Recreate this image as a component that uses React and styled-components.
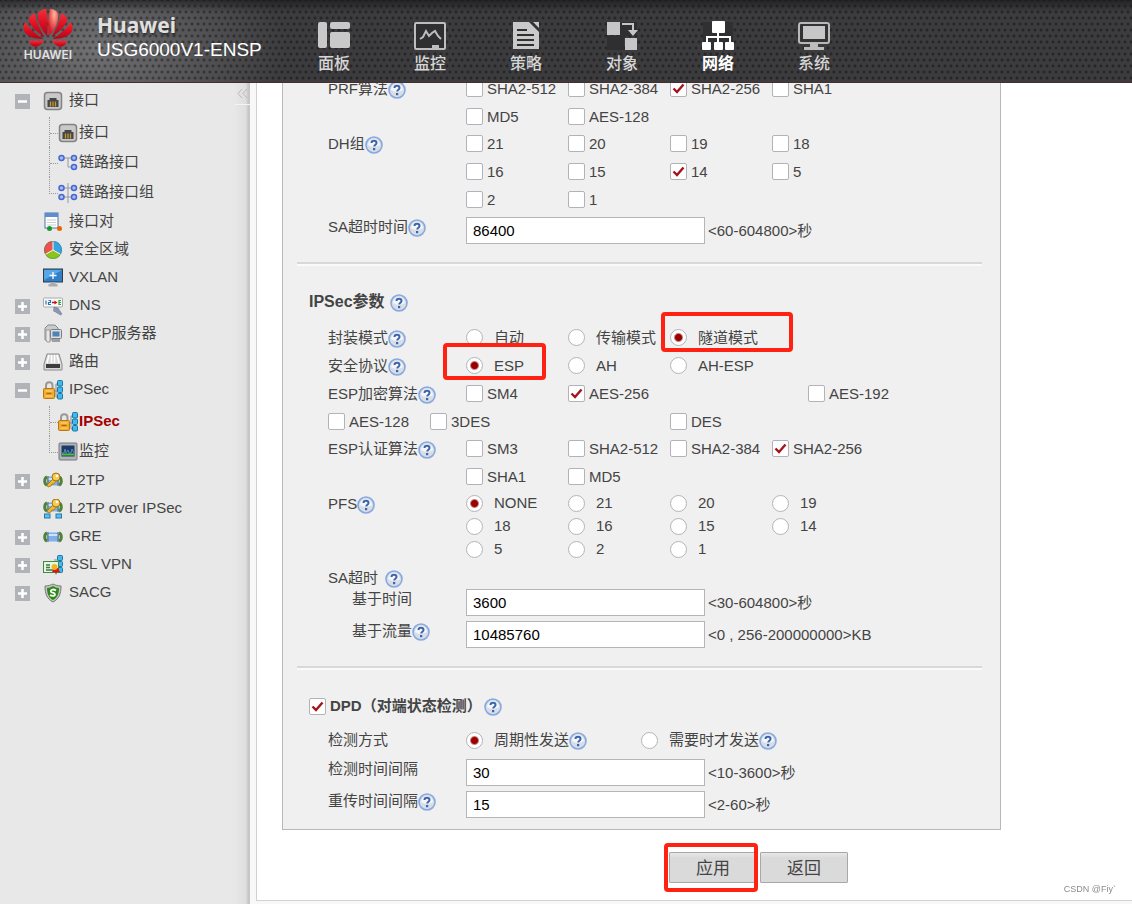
import { useState } from "react";
import styled, { createGlobalStyle } from "styled-components";

const GlobalStyle = createGlobalStyle`
  * {
    box-sizing: border-box;
  }
  body {
    margin: 0;
    background: #f8f8f8;
    color: #444;
    font-family: "Liberation Sans", "Noto Sans CJK SC", sans-serif;
    font-size: 15px;
    line-height: 20px;
  }
`;

const Page = styled.div`
  display: flex;
  flex-direction: column;
  height: 100vh;
`;

/* ---------- header ---------- */

const Header = styled.header`
  display: flex;
  align-items: flex-start;
  flex: none;
  height: 83px;
  color: #fff;
  border-bottom: 1px solid #4a2c2c;
  background:
    linear-gradient(rgba(20, 20, 22, 0.6), transparent 12px),
    radial-gradient(circle, rgba(0, 0, 0, 0.35) 1px, transparent 2px) 0 0 / 6px 12px,
    radial-gradient(circle, rgba(0, 0, 0, 0.35) 1px, transparent 2px) 3px 6px / 6px 12px,
    radial-gradient(ellipse 190px 120px at 95px 50px, #717173, #3c3c3e);
`;

const Brand = styled.div`
  display: flex;
  flex: none;
  width: 286px;
  padding: 8px 0 0 22px;
`;

const LogoBox = styled.div`
  display: flex;
  flex-direction: column;
  align-items: center;
  width: 52px;
  margin-right: 23px;
  font: 600 12px/14px Inter, sans-serif;
  color: #e2e2e2;
`;

const BrandName = styled.div`
  margin-top: 6px;
  font: bold 21px/22px "Noto Sans", sans-serif;
  color: #e0e0e0;
  text-shadow: 1px 2px 2px rgba(0, 0, 0, 0.5);
`;

const Model = styled.div`
  font-size: 19px;
  line-height: 28px;
  white-space: nowrap;
`;

const TopNav = styled.nav`
  display: flex;
`;

const TopLink = styled.a`
  display: flex;
  flex-direction: column;
  align-items: center;
  width: 96px;
  padding-top: 21px;
  color: ${(p) => (p.$active ? "#fff" : "#d6d6d6")};
  font-size: 16px;
  font-weight: ${(p) => (p.$active ? 700 : 500)};
  line-height: 28px;
  text-decoration: none;
  svg {
    width: 32px;
    height: 29px;
  }
`;

/* ---------- sidebar ---------- */

const Body = styled.div`
  display: flex;
  flex: 1;
  min-height: 0;
`;

const Sidebar = styled.aside`
  position: relative;
  flex: none;
  width: 250px;
  padding: 3px 0 0 15px;
  background: linear-gradient(90deg, #e8e8e8 234px, #dedede 246px, #c8c8c8 248px, #c4c4c4);
`;

const Collapse = styled.button`
  position: absolute;
  top: 0;
  right: 0;
  width: 15px;
  height: 22px;
  padding: 0;
  border: none;
  border-bottom: 1px solid #f4f4f4;
  background: none;
  color: #b9b9b9;
  line-height: 0;
`;

const Tree = styled.ul`
  margin: 0;
  padding: 0;
  list-style: none;
`;

const TreeRow = styled.div`
  display: flex;
  align-items: center;
  height: 28px;
`;

const Toggle = styled.button`
  width: 15px;
  height: 15px;
  margin: 3px 13px 0 0;
  padding: 0;
  border: none;
  background: #b0b4b8;
  line-height: 0;
  visibility: ${(p) => (p.$hidden ? "hidden" : "visible")};
`;

const TreeLink = styled.a`
  display: flex;
  align-items: center;
  color: ${(p) => (p.$active ? "#a50000" : "#444")};
  font-weight: ${(p) => (p.$active ? 700 : 400)};
  text-decoration: none;
  white-space: nowrap;
  svg {
    width: 20px;
    height: 20px;
    margin: 2px ${(p) => (p.$sub ? 1 : 6)}px 0 0;
  }
`;

const SubTree = styled.ul`
  margin: 3px 0 0 34px;
  padding: 0;
  list-style: none;
  li {
    display: flex;
    height: 30px;
    border-left: 1px dotted #999;
  }
  li::before {
    content: "";
    flex: none;
    width: 8px;
    height: 16px;
    border-bottom: 1px dotted #999;
  }
  li:last-child {
    border-left: none;
  }
  li:last-child::before {
    border-left: 1px dotted #999;
  }
`;

/* ---------- content ---------- */

const Main = styled.main`
  display: flex;
  flex-direction: column;
  flex: 1;
  min-width: 0;
  margin: 0 0 3px 6px;
  border: solid #d2d2d2;
  border-width: 0 0 1px 1px;
  background: #fff;
`;

/* column-reverse keeps the form scrolled to its end */
const Scroller = styled.div`
  display: flex;
  flex-direction: column-reverse;
  flex: 1;
  min-height: 0;
  overflow-y: auto;
  scrollbar-width: none;
`;

const Form = styled.form`
  flex: none;
  padding: 0 131px 17px 25px;
`;

const Panel = styled.div`
  padding: 20px 18px 6px 14px;
  border: 1px solid #b8b8bc;
  background: #f0f0f0;
`;

const Section = styled.section`
  padding: 0 0 13px 31px;
  &:last-child {
    padding-bottom: 0;
  }
`;

const Divider = styled.hr`
  height: 4px;
  margin: 0;
  border: none;
  border-top: 2px solid #d8d8d8;
  border-bottom: 2px solid #fafafa;
`;

const Heading = styled.h2`
  display: flex;
  align-items: center;
  gap: ${(p) => p.$gap}px;
  height: 24px;
  margin: 24px 0 10px -19px;
  font-size: ${(p) => p.$size}px;
  font-weight: 700;
`;

const Row = styled.div`
  display: flex;
  min-height: ${(p) => p.$height}px;
  padding-top: ${(p) => p.$top || 0}px;
`;

const Label = styled.div`
  display: flex;
  align-items: center;
  flex: none;
  gap: ${(p) => p.$gap || 0}px;
  width: 138px;
  height: ${(p) => p.$height}px;
  padding-left: ${(p) => p.$indent || 0}px;
  white-space: nowrap;
`;

const Options = styled.div`
  display: grid;
  grid-template-columns: ${(p) => p.$columns || "repeat(4, 102px)"};
  grid-auto-rows: ${(p) => p.$height}px;
  row-gap: 1px;
`;

const Option = styled.label`
  position: relative;
  display: flex;
  align-items: center;
  gap: ${(p) => p.$gap}px;
  white-space: nowrap;
`;

const OptionText = styled.span`
  display: flex;
  align-items: center;
`;

const CheckBox = styled.span`
  position: relative;
  display: flex;
  svg {
    position: absolute;
    inset: 0;
    pointer-events: none;
  }
`;

const Check = styled.input`
  appearance: none;
  flex: none;
  width: 17px;
  height: 17px;
  margin: 0;
  border: 1px solid #b2b2b9;
  border-radius: 2px;
  background: #fff;
`;

const Radio = styled.input`
  appearance: none;
  flex: none;
  width: 17px;
  height: 17px;
  margin: 0;
  border: 1px solid #b4b4b8;
  border-radius: 50%;
  background: #fff;
  &:checked {
    background: radial-gradient(circle, #990000 3px, #fff 5px);
  }
`;

const TextBox = styled.input`
  width: 239px;
  height: 27px;
  padding: 0 6px;
  border: 1px solid #b5b5b9;
  background: #fff;
  color: #000;
  font: inherit;
`;

const Hint = styled.span`
  padding-left: 3px;
  line-height: 28px;
  white-space: nowrap;
`;

const HelpButton = styled.button`
  flex: none;
  width: 18px;
  height: 18px;
  margin: 2px 0 0;
  padding: 0;
  border: none;
  background: none;
  line-height: 0;
`;

const Buttons = styled.div`
  display: flex;
  gap: 3px;
  padding: 22px 0 0 387px;
`;

const Button = styled.button`
  position: relative;
  width: 88px;
  height: 31px;
  padding: 2px 0 0;
  border: 1px solid #a8a8ab;
  border-radius: 1px;
  background: linear-gradient(#e8e8e8, #dadada 5px);
  color: #444;
  font: 17px/20px "Liberation Sans", "Noto Sans CJK SC", sans-serif;
`;

const Mark = styled.span`
  position: absolute;
  left: ${(p) => p.$left}px;
  top: ${(p) => p.$top}px;
  z-index: 1;
  width: ${(p) => p.$width}px;
  height: ${(p) => p.$height}px;
  border: 4px solid #ff2213;
  border-radius: 4px;
  pointer-events: none;
`;

const Watermark = styled.div`
  position: fixed;
  right: 16px;
  bottom: 5px;
  color: #8c8c8c;
  font-size: 9px;
`;

/* ---------- drawings ---------- */

const HuaweiLogo = () => (
  <svg width="50" height="40" viewBox="0 0 50 40">
    <defs>
      <linearGradient id="petal" x1="0" y1="0" x2="0" y2="1">
        <stop offset="0" stopColor="#f2303a" />
        <stop offset="0.5" stopColor="#dc0f20" />
        <stop offset="1" stopColor="#b00518" />
      </linearGradient>
      <radialGradient id="shine" cx="0.6" cy="0.2" r="0.7">
        <stop offset="0" stopColor="#ffb79c" />
        <stop offset="1" stopColor="#e01726" />
      </radialGradient>
    </defs>
    <g fill="url(#petal)">
      <path d="M24 28C17 20 14 12 15 6c1-3 4-5 8-5 2 8 2 19 1 27z" />
      <path d="M26 28C33 20 36 12 35 6c-1-3-4-5-8-5-2 8-2 19-1 27z" fill="url(#shine)" />
      <path d="M22 29.500C12 23 5 16 6 10c1-2 3-4 6-5 1 9 5 17 10 24.500z" />
      <path d="M28 29.500c10-6.500 17-13.500 16-19.500-1-2-3-4-6-5-1 9-5 17-10 24.500z" />
      <path d="M20.500 31C9 31 1 27 .5 21c0-3 .5-5 2-7 4 7 10 12 18 17z" />
      <path d="M29.500 31c11.500 0 19.500-4 20-10 0-3-.5-5-2-7-4 7-10 12-18 17z" />
      <path d="M21 32.500c-3 5-7 7-10 6-3-.5-4-3-5-6z" />
      <path d="M29 32.500c3 5 7 7 10 6 3-.5 4-3 5-6z" />
    </g>
  </svg>
);

const navIcons = {
  dashboard: (
    <g fill="#c9c9c9">
      <rect x="0" y="1" width="9" height="26" rx="2" />
      <rect x="12" y="1" width="20" height="7" rx="2" />
      <rect x="12" y="11" width="20" height="16" rx="2" />
    </g>
  ),
  monitor: (
    <>
      <rect x="1" y="2" width="30" height="26" rx="1" fill="#2f2f31" stroke="#bdbdbd" strokeWidth="2" />
      <path d="M6 18l3-2 3-6 3 5 3-3 3-2 3 5 3 3" fill="none" stroke="#bdbdbd" strokeWidth="2" />
      <path d="M18 24h7v4h-7z" fill="#bdbdbd" />
    </>
  ),
  policy: (
    <>
      <path d="M3 1h17l9 9v18H3z" fill="#c9c9c9" />
      <path d="M19 1l10 10V8l-7-7z" fill="#333" />
      <path d="M23 1h6v6z" fill="#c9c9c9" />
      <path d="M7 9h10M7 14h17M7 19h17M7 24h17" stroke="#303032" strokeWidth="2" />
    </>
  ),
  object: (
    <>
      <path d="M1 15h17v14H1zM14 1h17v14H14z" fill="#2f2f31" />
      <path d="M1 1h13v13H1zM19 17h12v12H19z" fill="#c6c6c6" />
      <path d="M16 3h11v8" fill="none" stroke="#c6c6c6" strokeWidth="2" />
      <path d="M22 9h10l-5 6z" fill="#c6c6c6" />
    </>
  ),
  network: (
    <>
      <path d="M1 1h30v28H1z" fill="#303032" />
      <g fill="#fff">
        <rect x="10" y="0" width="13" height="12" rx="1" />
        <rect x="0" y="21" width="9" height="8" rx="1" />
        <rect x="12" y="21" width="9" height="8" rx="1" />
        <rect x="23" y="21" width="9" height="8" rx="1" />
      </g>
      <path d="M16 11v10M5 22v-6h23v6" fill="none" stroke="#fff" strokeWidth="2" />
    </>
  ),
  system: (
    <>
      <rect x="1" y="2" width="30" height="20" rx="2" fill="#333" stroke="#b9b9b9" strokeWidth="2" />
      <rect x="5" y="5" width="22" height="13" fill="#c6c6c6" />
      <path d="M12 22h8v4h6v3H6v-3h6z" fill="#bdbdbd" />
    </>
  ),
};

const portIcon = (
  <>
    <rect x="1.500" y="1.500" width="17" height="17" rx="3" fill="#c9c9c9" stroke="#828282" strokeWidth="1.500" />
    <path d="M4.500 16V9h2V7h7v2h2v7z" fill="#44464a" />
    <path d="M7.500 10.500v5M10 10.500v5M12.500 10.500v5" stroke="#c99a2c" strokeWidth="1.300" />
  </>
);

const lockIcon = (
  <>
    <path d="M3 10V5.500C3 1 9.500 1 9.500 5.500V10" fill="none" stroke="#999" strokeWidth="2" />
    <rect x="0.500" y="8.500" width="11" height="10" rx="1" fill="#f3ab2d" stroke="#b97812" />
    <path d="M2.500 11h7M2.500 16h7" stroke="#ffdd83" />
    <path d="M3.500 13.500h5" stroke="#a86d12" strokeWidth="1.500" />
    <path d="M16 4h-3v13h3M11 11h5" fill="none" stroke="#888" />
    <g fill="#45b8ea" stroke="#1777a8">
      <rect x="14.500" y="0.500" width="5" height="5.500" rx="1" />
      <rect x="14.500" y="7" width="5" height="5.500" rx="1" />
      <rect x="14.500" y="13.500" width="5" height="5.500" rx="1" />
    </g>
  </>
);

const tunnel = (
  <>
    <path d="M4 5.500h12v9H4z" fill="#7fb0ec" />
    <path d="M5 8h10" stroke="#cde3fb" strokeWidth="2" />
    <path d="M4 6C1 7 1 13 4 14M16 6c3 1 3 7 0 8" fill="none" stroke="#4f8238" strokeWidth="3" />
    <path d="M5 5v10M15 5v10" stroke="#5b6a70" />
  </>
);

const key = (
  <>
    <path d="M11 7l-7 7 1 2 3-1 1-2h2l3-4" fill="#f0b92d" stroke="#a47414" strokeWidth="0.800" />
    <circle cx="13" cy="6" r="4" fill="#f7cb50" stroke="#a47414" />
    <circle cx="14" cy="5" r="1.300" fill="#fff" />
  </>
);

const treeIcons = {
  port: portIcon,
  link: (
    <>
      <path d="M4 5h12M10 5v9h6" fill="none" stroke="#999" />
      <g fill="#a7bdf2" stroke="#4768cf" strokeWidth="1.500">
        <circle cx="3.500" cy="5" r="2.500" />
        <circle cx="16" cy="5" r="2.500" />
        <circle cx="16" cy="14" r="2.500" />
      </g>
    </>
  ),
  linkGroup: (
    <>
      <path d="M4 5h12M4 14h12M10 0v20" stroke="#999" />
      <g fill="#a7bdf2" stroke="#4768cf" strokeWidth="1.500">
        <circle cx="3.500" cy="5" r="2.500" />
        <circle cx="16" cy="5" r="2.500" />
        <circle cx="3.500" cy="14" r="2.500" />
        <circle cx="16" cy="14" r="2.500" />
      </g>
    </>
  ),
  pair: (
    <>
      <rect x="2" y="1" width="13" height="15" fill="#fff" stroke="#4d73ab" />
      <path d="M2 1h13v4H2z" fill="#5e8ed0" />
      <path d="M4 8h9M4 10.500h9M4 13h9" stroke="#ccc" />
      <circle cx="6.500" cy="16.500" r="2.500" fill="#139b28" />
      <circle cx="16.500" cy="16.500" r="2.500" fill="#e86504" />
    </>
  ),
  zone: (
    <>
      <path d="M10 10V1A9 9 0 0 1 17.800 14.500z" fill="#34a4e2" />
      <path d="M10 10L2.200 14.500A9 9 0 0 1 10 1z" fill="#e8544b" />
      <path d="M10 10l7.800 4.500a9 9 0 0 1-15.600 0z" fill="#8cc41c" />
      <path d="M10 10V1M10 10l7.800 4.500M10 10l-7.800 4.500" stroke="#f5f5f5" />
      <circle cx="10" cy="10" r="8.500" fill="none" stroke="#4c7f67" strokeOpacity="0.500" />
    </>
  ),
  vxlan: (
    <>
      <rect x="0.500" y="1" width="19" height="13" fill="#2f80c8" stroke="#333b44" />
      <path d="M1 2h18L1 12z" fill="#55a9e6" />
      <path d="M10 4v7M6.500 7.500h7" stroke="#fff" strokeWidth="1.300" />
      <path d="M7.500 14h5v2h2v2.500h-9V16h2z" fill="#a9adb1" />
    </>
  ),
  dns: (
    <>
      <rect x="0.500" y="2" width="19" height="9" rx="1" fill="#fafafa" stroke="#aaa" />
      <path d="M3 4.500v4M5.500 4.500h2v2h-2v2h2.500" fill="none" stroke="#2179bd" strokeWidth="1.200" />
      <path d="M9 6.500h3" stroke="#c11" strokeWidth="1.500" />
      <path d="M11.500 4.500l3 2-3 2z" fill="#c11" />
      <path d="M18 4.500h-2v4h2M16 6.500h2" fill="none" stroke="#2c9b38" strokeWidth="1.200" />
      <path d="M11 11l4 1 4 6-1.500 1-5-3-2-1z" fill="#8b97b3" stroke="#66708b" strokeWidth="0.500" />
    </>
  ),
  dhcp: (
    <>
      <path d="M2 16V4l3-3h7l3 3v12z" fill="#c9cccd" stroke="#868a8c" />
      <path d="M3 16V6h4v12H4z" fill="#e8e8e8" stroke="#999" />
      <rect x="7.500" y="5.500" width="11" height="9" rx="1" fill="#ddd" stroke="#7b7f82" />
      <rect x="9.500" y="7.500" width="7" height="5" fill="#4d83b8" />
      <path d="M9 15h8v3H9z" fill="#9ca0a3" />
    </>
  ),
  route: (
    <>
      <path d="M4 2h12l3 10v6H1v-6z" fill="#d9d9d9" stroke="#8a8a8a" />
      <path d="M6 3l-2 8M8.500 3v8M11.500 3v8M14 3l2 8" stroke="#fff" strokeWidth="1.500" />
      <rect x="3" y="12" width="14" height="4" fill="#3d3d3d" />
    </>
  ),
  ipsec: lockIcon,
  stats: (
    <>
      <rect x="1" y="1" width="18" height="17" rx="1" fill="#b1b3b6" stroke="#77797c" />
      <rect x="3.500" y="3.500" width="13" height="11" fill="#1b3c69" />
      <path d="M4 11h2l1-4 1 4 2-3 1 3h2l1-4 2 4" fill="none" stroke="#5c86bd" />
      <path d="M4 12.500h12" stroke="#4fc03a" strokeWidth="2" />
    </>
  ),
  l2tp: (
    <>
      {tunnel}
      {key}
    </>
  ),
  l2tpIpsec: (
    <>
      <g transform="translate(0 -2)">{tunnel}</g>
      <g transform="translate(0 -2)">{key}</g>
      <g fill="#5cc0ee" stroke="#1d7eae">
        <rect x="1.500" y="15" width="5.500" height="4" />
        <rect x="13" y="15" width="5.500" height="4" />
      </g>
    </>
  ),
  gre: tunnel,
  ssl: (
    <>
      <path d="M11 5h4" stroke="#888" />
      <g fill="#45b8ea" stroke="#1777a8">
        <rect x="14.500" y="0.500" width="5" height="5" rx="1" />
        <rect x="14.500" y="6.500" width="5" height="5" rx="1" />
        <rect x="14.500" y="12.500" width="5" height="5" rx="1" />
      </g>
      <rect x="0.500" y="6.500" width="15" height="11" fill="#eaf4e4" stroke="#3d8d3d" />
      <path d="M3 10h4M3 12.500h4M3 15h7" stroke="#3a7c43" strokeWidth="1.300" />
      <path d="M11 13l-2 4 3 0 1 3 1-3 3 0-2-4z" fill="#d81818" />
      <circle cx="11.500" cy="12" r="3" fill="#f4b620" />
    </>
  ),
  sacg: (
    <>
      <path d="M2 3c3 0 6-1 8-2 2 1 5 2 8 2 0 8-2 13-8 16C4 16 2 11 2 3z" fill="#c3c9c2" stroke="#777" />
      <path d="M4 5c2 0 4-1 6-2 2 1 4 2 6 2 0 6-2 10-6 12C6 15 4 11 4 5z" fill="#2d8719" />
      <path d="M13 7.500C10 5.500 7 7 8 8.800c.6 1.200 4 .6 4 2.700 0 1.700-3 2-5 .5" fill="none" stroke="#fff" strokeWidth="1.800" />
    </>
  ),
};

const TreeIcon = ({ name }) => <svg viewBox="0 0 20 20">{treeIcons[name]}</svg>;

const Help = () => (
  <HelpButton type="button" aria-label="帮助">
    <svg width="18" height="18" viewBox="0 0 18 18">
      <circle cx="9" cy="9" r="8" fill="#d9dde5" stroke="#86a9e0" strokeWidth="1.600" />
      <path d="M3 9a6 6 0 0 1 12 0c-3 2-8 3-12 0z" fill="#f3f5f8" />
      <path d="M6.500 7C6.500 4 11.500 4 11.500 7c0 1.700-2.300 1.700-2.300 3.600" fill="none" stroke="#3c64ab" strokeWidth="2" />
      <rect x="8" y="12" width="2.200" height="2.200" fill="#3c64ab" />
    </svg>
  </HelpButton>
);

/* ---------- data ---------- */

const topLinks = [
  ["dashboard", "面板"],
  ["monitor", "监控"],
  ["policy", "策略"],
  ["object", "对象"],
  ["network", "网络"],
  ["system", "系统"],
];

const tree = [
  {
    icon: "port",
    text: "接口",
    toggle: "minus",
    children: [
      { icon: "port", text: "接口" },
      { icon: "link", text: "链路接口" },
      { icon: "linkGroup", text: "链路接口组" },
    ],
  },
  { icon: "pair", text: "接口对" },
  { icon: "zone", text: "安全区域" },
  { icon: "vxlan", text: "VXLAN" },
  { icon: "dns", text: "DNS", toggle: "plus" },
  { icon: "dhcp", text: "DHCP服务器", toggle: "plus" },
  { icon: "route", text: "路由", toggle: "plus" },
  {
    icon: "ipsec",
    text: "IPSec",
    toggle: "minus",
    children: [
      { icon: "ipsec", text: "IPSec", active: true },
      { icon: "stats", text: "监控" },
    ],
  },
  { icon: "l2tp", text: "L2TP", toggle: "plus" },
  { icon: "l2tpIpsec", text: "L2TP over IPSec" },
  { icon: "gre", text: "GRE", toggle: "plus" },
  { icon: "ssl", text: "SSL VPN", toggle: "plus" },
  { icon: "sacg", text: "SACG", toggle: "plus" },
];

const pfsGroups = ["NONE", "21", "20", "19", "18", "16", "15", "14", "5", "2", "1"];

/* ---------- components ---------- */

const CheckOption = ({ text, on }) => {
  const [checked, setChecked] = useState(Boolean(on));
  return (
    <Option $gap={4}>
      <CheckBox>
        <Check type="checkbox" checked={checked} onChange={() => setChecked(!checked)} />
        {checked && (
          <svg width="17" height="17" viewBox="0 0 17 17">
            <path d="M3.500 8.500l3.500 3.500 6.500-7.500" fill="none" stroke="#a3141c" strokeWidth="2.400" />
          </svg>
        )}
      </CheckBox>
      {text}
    </Option>
  );
};

const RadioOption = ({ name, text, on, help, children }) => (
  <Option $gap={11}>
    <Radio type="radio" name={name} defaultChecked={on} />
    <OptionText>
      {text}
      {help && <Help />}
    </OptionText>
    {children}
  </Option>
);

// a trailing * marks an option that is ticked
const CheckRow = ({ label, items, height, columns }) => (
  <Row $height={height}>
    <Label $height={28}>
      {label}
      <Help />
    </Label>
    <Options $height={27} $columns={columns}>
      {items.map((text) => (
        <CheckOption key={text} text={text.replace("*", "")} on={text.endsWith("*")} />
      ))}
    </Options>
  </Row>
);

const InputRow = ({ id, label, value, hint, help, indent }) => (
  <Row $height={32}>
    <Label $height={20} $indent={indent}>
      <label htmlFor={id}>{label}</label>
      {help && <Help />}
    </Label>
    <TextBox id={id} defaultValue={value} />
    <Hint>{hint}</Hint>
  </Row>
);

const App = () => {
  return (
    <Page>
      <GlobalStyle />
      <Header>
        <Brand>
          <LogoBox>
            <HuaweiLogo />
            HUAWEI
          </LogoBox>
          <div>
            <BrandName>Huawei</BrandName>
            <Model>USG6000V1-ENSP</Model>
          </div>
        </Brand>
        <TopNav>
          {topLinks.map(([icon, text]) => (
            <TopLink key={icon} href="#" $active={icon === "network"}>
              <svg viewBox="0 0 32 29">{navIcons[icon]}</svg>
              {text}
            </TopLink>
          ))}
        </TopNav>
      </Header>
      <Body>
        <Sidebar>
          <Collapse aria-label="收起">
            <svg width="11" height="9" viewBox="0 0 11 9">
              <path d="M5 0L1 4.500 5 9M10 0L6 4.500 10 9" fill="none" stroke="currentColor" />
            </svg>
          </Collapse>
          <Tree>
            {tree.map((item) => (
              <li key={item.text}>
                <TreeRow>
                  <Toggle $hidden={!item.toggle} aria-label={item.text}>
                    <svg width="15" height="15" viewBox="0 0 15 15">
                      <path
                        d={item.toggle === "minus" ? "M3 7.500h9" : "M3 7.500h9M7.500 3v9"}
                        stroke="#fff"
                        strokeWidth="2.500"
                      />
                    </svg>
                  </Toggle>
                  <TreeLink href="#">
                    <TreeIcon name={item.icon} />
                    {item.text}
                  </TreeLink>
                </TreeRow>
                {item.children && (
                  <SubTree>
                    {item.children.map((sub) => (
                      <li key={sub.text}>
                        <TreeLink href="#" $sub $active={sub.active}>
                          <TreeIcon name={sub.icon} />
                          {sub.text}
                        </TreeLink>
                      </li>
                    ))}
                  </SubTree>
                )}
              </li>
            ))}
          </Tree>
        </Sidebar>
        <Main>
          <Scroller>
            <Form onSubmit={(e) => e.preventDefault()}>
              <Panel>
                <Section>
                  <CheckRow
                    label="PRF算法"
                    height={55}
                    items={["SHA2-512", "SHA2-384", "SHA2-256*", "SHA1", "MD5", "AES-128"]}
                  />
                  <CheckRow
                    label="DH组"
                    height={87}
                    items={["21", "20", "19", "18", "16", "15", "14*", "5", "2", "1"]}
                  />
                  <InputRow id="sa" label="SA超时时间" value="86400" hint="<60-604800>秒" help />
                </Section>
                <Divider />
                <Section>
                  <Heading $gap={5} $size={16}>
                    IPSec参数
                    <Help />
                  </Heading>
                  <Row $height={28}>
                    <Label $height={28}>
                      封装模式
                      <Help />
                    </Label>
                    <Options $height={27}>
                      <RadioOption name="mode" text="自动" />
                      <RadioOption name="mode" text="传输模式" />
                      <RadioOption name="mode" text="隧道模式" on>
                        <Mark $left={-9} $top={-12} $width={132} $height={40} />
                      </RadioOption>
                    </Options>
                  </Row>
                  <Row $height={28}>
                    <Label $height={28}>
                      安全协议
                      <Help />
                    </Label>
                    <Options $height={27}>
                      <RadioOption name="protocol" text="ESP" on>
                        <Mark $left={-23} $top={-9} $width={103} $height={37} />
                      </RadioOption>
                      <RadioOption name="protocol" text="AH" />
                      <RadioOption name="protocol" text="AH-ESP" />
                    </Options>
                  </Row>
                  <CheckRow
                    label="ESP加密算法"
                    height={28}
                    columns="102px 240px 102px"
                    items={["SM4", "AES-256*", "AES-192"]}
                  />
                  <Options $height={27} $columns="102px 240px 102px">
                    <CheckOption text="AES-128" />
                    <CheckOption text="3DES" />
                    <CheckOption text="DES" />
                  </Options>
                  <CheckRow
                    label="ESP认证算法"
                    height={55}
                    items={["SM3", "SHA2-512", "SHA2-384", "SHA2-256*", "SHA1", "MD5"]}
                  />
                  <Row $height={78} $top={2}>
                    <Label $height={24}>
                      PFS
                      <Help />
                    </Label>
                    <Options $height={22}>
                      {pfsGroups.map((text) => (
                        <RadioOption key={text} name="pfs" text={text} on={text === "NONE"} />
                      ))}
                    </Options>
                  </Row>
                  <Row $height={21}>
                    <Label $height={20} $gap={7}>
                      SA超时
                      <Help />
                    </Label>
                  </Row>
                  <InputRow id="byTime" label="基于时间" value="3600" hint="<30-604800>秒" indent={24} />
                  <InputRow
                    id="byFlow"
                    label="基于流量"
                    value="10485760"
                    hint="<0 , 256-200000000>KB"
                    indent={24}
                    help
                  />
                </Section>
                <Divider />
                <Section>
                  <Heading $gap={2} $size={15}>
                    <CheckOption text="DPD（对端状态检测）" on />
                    <Help />
                  </Heading>
                  <Row $height={31}>
                    <Label $height={24}>检测方式</Label>
                    <Options $height={24} $columns="175px 175px">
                      <RadioOption name="dpd" text="周期性发送" on help />
                      <RadioOption name="dpd" text="需要时才发送" help />
                    </Options>
                  </Row>
                  <InputRow id="interval" label="检测时间间隔" value="30" hint="<10-3600>秒" />
                  <InputRow id="retry" label="重传时间间隔" value="15" hint="<2-60>秒" help />
                </Section>
              </Panel>
              <Buttons>
                <Button type="submit">
                  应用
                  <Mark $left={-6} $top={-10} $width={94} $height={49} />
                </Button>
                <Button type="button">返回</Button>
              </Buttons>
            </Form>
          </Scroller>
        </Main>
      </Body>
      <Watermark>CSDN @Fiy`</Watermark>
    </Page>
  );
};

export default App;
